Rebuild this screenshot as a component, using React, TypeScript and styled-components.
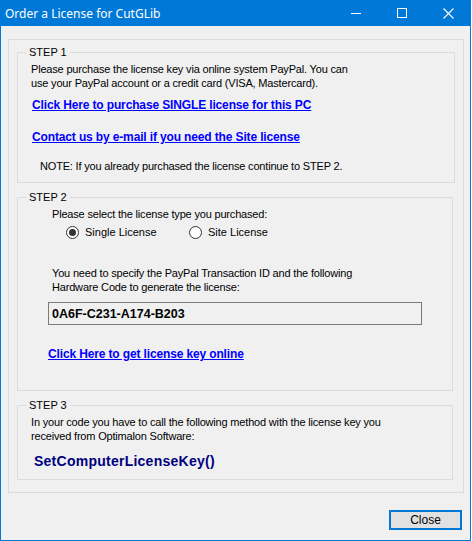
import React, { useState } from "react";
import styled, { createGlobalStyle } from "styled-components";

const GlobalStyle = createGlobalStyle`
  html, body {
    margin: 0;
    padding: 0;
    background: #ffffff;
  }
  body {
    font-family: "Liberation Sans", Arial, sans-serif;
    font-size: 11px;
    color: #000;
  }
`;

const Window = styled.div`
  width: 471px;
  height: 541px;
  box-sizing: border-box;
  border: 1px solid #0078d7;
  border-top: none;
  background: #f0f0f0;
  display: flex;
  flex-direction: column;
`;

const TitleBar = styled.div`
  height: 26px;
  background: #0078d7;
  color: #fff;
  display: flex;
  align-items: center;
  margin: 0 -1px;
  padding-left: 5px;
  font-family: "Noto Sans", "Open Sans", sans-serif;
  font-size: 12px;
`;

const Title = styled.div`
  flex: 1;
`;

const CaptionButton = styled.div`
  width: 46px;
  height: 26px;
  display: flex;
  align-items: center;
  justify-content: center;
`;

const Body = styled.div`
  flex: 1;
  display: flex;
  flex-direction: column;
  padding: 13px 0 0 7px;
`;

const Panel = styled.div`
  width: 456px;
  box-sizing: border-box;
  border: 1px solid #dcdcdc;
  padding: 5px 0 12px 8px;
`;

const Group = styled.fieldset<{ $width: number; $gap?: number; $bottom: number }>`
  width: ${(p) => p.$width}px;
  box-sizing: border-box;
  margin: ${(p) => p.$gap ?? 0}px 0 0 0;
  padding: 3px 0 ${(p) => p.$bottom}px 0;
  border: 1px solid #dcdcdc;
  min-width: 0;
`;

const Legend = styled.legend`
  margin-left: 8px;
  padding: 0 3px;
  line-height: 14px;
  font-size: 11px;
`;

const Text = styled.div<{ $indent: number; $gap?: number }>`
  margin: ${(p) => p.$gap ?? 0}px 0 0 ${(p) => p.$indent}px;
  line-height: 14px;
  letter-spacing: -0.18px;
`;

const Link = styled.a<{ $indent: number; $gap?: number }>`
  display: block;
  width: max-content;
  margin: ${(p) => p.$gap ?? 0}px 0 0 ${(p) => p.$indent}px;
  line-height: 16px;
  font-size: 12px;
  font-weight: bold;
  letter-spacing: -0.14px;
  color: #0000ff;
  text-decoration: underline;
  cursor: pointer;
`;

const RadioRow = styled.div`
  display: flex;
  margin: 4px 0 0 48px;
  height: 14px;
  align-items: center;
`;

const RadioItem = styled.label<{ $width: number }>`
  display: flex;
  align-items: center;
  width: ${(p) => p.$width}px;
  cursor: default;
`;

const RadioCircle = styled.span<{ $checked: boolean }>`
  width: 13px;
  height: 13px;
  box-sizing: border-box;
  border: 1px solid #333;
  border-radius: 50%;
  background: #fff;
  display: flex;
  align-items: center;
  justify-content: center;
  margin-right: 6px;
  &::after {
    content: "";
    width: 7px;
    height: 7px;
    border-radius: 50%;
    background: #333;
    display: ${(p) => (p.$checked ? "block" : "none")};
  }
`;

const CodeBox = styled.div`
  margin: 8px 0 0 30px;
  width: 374px;
  height: 23px;
  box-sizing: border-box;
  border: 1px solid #7a7a7a;
  background: #f0f0f0;
  display: flex;
  align-items: center;
  padding-left: 3px;
  font-size: 12.5px;
  font-weight: bold;
`;

const Method = styled.div`
  margin: 9px 0 0 16px;
  line-height: 18px;
  font-size: 14px;
  font-weight: bold;
  letter-spacing: 0.25px;
  color: #000080;
`;

const Footer = styled.div`
  display: flex;
  justify-content: flex-end;
  padding: 17px 8px 0 0;
`;

const Button = styled.button`
  width: 73px;
  height: 20px;
  box-sizing: border-box;
  border: 2px solid #0078d7;
  background: #e1e1e1;
  font-family: "Liberation Sans", Arial, sans-serif;
  font-size: 12px;
  color: #000;
  padding: 0;
`;

export default function App() {
  const [license, setLicense] = useState("single");

  return (
    <>
      <GlobalStyle />
      <Window>
        <TitleBar>
          <Title>Order a License for CutGLib</Title>
          <CaptionButton>
            <svg width="10" height="10" viewBox="0 0 10 10">
              <path d="M0 5.5h10" stroke="#fff" strokeWidth="1" />
            </svg>
          </CaptionButton>
          <CaptionButton>
            <svg width="10" height="10" viewBox="0 0 10 10">
              <rect x="0.5" y="0.5" width="9" height="9" fill="none" stroke="#fff" strokeWidth="1" />
            </svg>
          </CaptionButton>
          <CaptionButton>
            <svg width="11" height="11" viewBox="0 0 11 11">
              <path d="M0.5 0.5l10 10M10.5 0.5l-10 10" stroke="#fff" strokeWidth="1.1" />
            </svg>
          </CaptionButton>
        </TitleBar>
        <Body>
          <Panel>
            <Group $width={438} $bottom={9}>
              <Legend>STEP 1</Legend>
              <Text $indent={13}>
                Please purchase the license key via online system PayPal. You can
                <br />
                use your PayPal account or a credit card (VISA, Mastercard).
              </Text>
              <Link $indent={14} $gap={7}>Click Here to purchase SINGLE license for this PC</Link>
              <Link $indent={14} $gap={16}>Contact us by e-mail if you need the Site license</Link>
              <Text $indent={22} $gap={14}>NOTE: If you already purchased the license continue to STEP 2.</Text>
            </Group>
            <Group $width={436} $gap={7} $bottom={28}>
              <Legend>STEP 2</Legend>
              <Text $indent={34}>Please select the license type you purchased:</Text>
              <RadioRow>
                <RadioItem $width={123} onClick={() => setLicense("single")}>
                  <RadioCircle $checked={license === "single"} />
                  Single License
                </RadioItem>
                <RadioItem $width={110} onClick={() => setLicense("site")}>
                  <RadioCircle $checked={license === "site"} />
                  Site License
                </RadioItem>
              </RadioRow>
              <Text $indent={34} $gap={27}>
                You need to specify the PayPal Transaction ID and the following
                <br />
                Hardware Code to generate the license:
              </Text>
              <CodeBox>0A6F-C231-A174-B203</CodeBox>
              <Link $indent={30} $gap={21}>Click Here to get license key online</Link>
            </Group>
            <Group $width={436} $gap={7} $bottom={9}>
              <Legend>STEP 3</Legend>
              <Text $indent={13}>
                In your code you have to call the following method with the license key you
                <br />
                received from Optimalon Software:
              </Text>
              <Method>SetComputerLicenseKey()</Method>
            </Group>
          </Panel>
          <Footer>
            <Button>Close</Button>
          </Footer>
        </Body>
      </Window>
    </>
  );
}
